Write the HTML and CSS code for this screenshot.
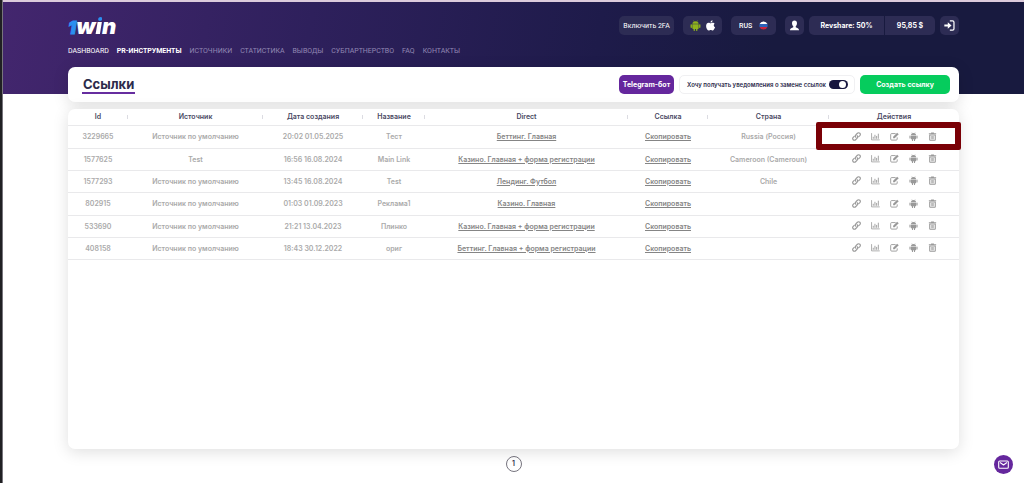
FILE: index.html
```html
<!DOCTYPE html>
<html lang="ru">
<head>
  <meta charset="UTF-8" />
  <meta name="viewport" content="width=device-width, initial-scale=1.0"/>
  <title>1win - Ссылки</title>
  <link rel="stylesheet" href="styles.css">
</head>
<body>

  <!-- Icon sprite -->
  <svg class="sprite" aria-hidden="true">
    <symbol id="i-link" viewBox="0 0 16 16">
      <g fill="none" stroke="currentColor" stroke-width="2" stroke-linecap="round">
        <path d="M7 9.6C5.600 8.300 5.700 6.300 6.800 5.100L9.600 2.200C10.800 1 12.700 1 13.900 2.200C15 3.400 15 5.200 13.900 6.400L12 8.300"/>
        <path d="M9 6.400C10.400 7.700 10.300 9.700 9.200 10.900L6.400 13.800C5.200 15 3.300 15 2.100 13.800C1 12.600 1 10.800 2.100 9.600L4 7.700"/>
      </g>
    </symbol>
    <symbol id="i-chart" viewBox="0 0 16 16">
      <path d="M1 2v12h14.500" fill="none" stroke="currentColor" stroke-width="1.400"/>
      <path d="M4 8.500v3.500M7 5v7M10 7v5M13 3v9" fill="none" stroke="currentColor" stroke-width="1.600"/>
    </symbol>
    <symbol id="i-edit" viewBox="0 0 16 16">
      <path d="M10 2.800H3A1.800 1.800 0 0 0 1.200 4.600V12.600A1.800 1.800 0 0 0 3 14.400H11A1.800 1.800 0 0 0 12.800 12.600V9.500" fill="none" stroke="currentColor" stroke-width="1.600"/>
      <path d="M5.500 8.500L12.700 1.300L15.500 4.100L8.300 11.300H5.500z" fill="currentColor"/>
    </symbol>
    <symbol id="i-android" viewBox="0 0 16 16">
      <path d="M5 .8L6.200 2.600M11 .8L9.800 2.600" stroke="currentColor" stroke-width=".9"/>
      <path d="M3.400 5.500C3.600 3.300 5.500 1.900 8 1.900S12.400 3.300 12.600 5.500z" fill="currentColor"/>
      <path d="M3.400 6.200H12.600V12A1 1 0 0 1 11.600 13H10.800V15A1 1 0 0 1 8.800 15V13H7.200V15A1 1 0 0 1 5.200 15V13H4.400A1 1 0 0 1 3.400 12z" fill="currentColor"/>
      <rect x=".8" y="6" width="2" height="5.600" rx="1" fill="currentColor"/>
      <rect x="13.200" y="6" width="2" height="5.600" rx="1" fill="currentColor"/>
    </symbol>
    <symbol id="i-trash" viewBox="0 0 16 16">
      <path d="M5.500 2V1H10.500V2H14.500V3.800H1.500V2z" fill="currentColor"/>
      <path d="M3 5.400H13V13.800A1 1 0 0 1 12 14.800H4A1 1 0 0 1 3 13.800z" fill="none" stroke="currentColor" stroke-width="1.800"/>
      <path d="M6 7V13M8 7V13M10 7V13" stroke="currentColor" stroke-width="1.200"/>
    </symbol>
    <symbol id="i-apple" viewBox="0 0 16 16">
      <path d="M11 .3C11.100 2.200 9.700 3.800 8 3.800C7.800 2 9.300 .500 11 .300z" fill="currentColor"/>
      <path d="M8.200 4.800C9 4.800 9.700 4 11.200 4C12.500 4 13.500 4.700 14.100 5.500C12 6.700 12.300 9.800 14.600 10.700C14 12.600 12.600 15.400 11 15.400C9.900 15.400 9.600 14.700 8.300 14.700C7 14.700 6.600 15.400 5.600 15.400C3.900 15.400 1.600 11.900 1.600 8.700C1.600 5.800 3.400 4 5.300 4C6.600 4 7.400 4.800 8.200 4.800z" fill="currentColor"/>
    </symbol>
    <symbol id="i-user" viewBox="0 0 16 16">
      <path d="M8 .8C10.400 .8 11.600 2.400 11.600 4.600C11.600 6.500 10.800 8.200 9.800 9V10.600C11.500 11.500 14.600 11.700 14.600 15H1.400C1.400 11.700 4.500 11.500 6.200 10.600V9C5.200 8.200 4.400 6.500 4.400 4.600C4.400 2.400 5.600 .8 8 .8z" fill="currentColor"/>
    </symbol>
    <symbol id="i-exit" viewBox="0 0 16 16">
      <path d="M8.500 1.300H12.500A2 2 0 0 1 14.500 3.300V12.700A2 2 0 0 1 12.500 14.700H8.500" fill="none" stroke="currentColor" stroke-width="1.800"/>
      <path d="M.5 6.700H5.500V3.300L11 8L5.500 12.700V9.300H.5z" fill="currentColor"/>
    </symbol>
    <symbol id="i-flag" viewBox="0 0 16 16">
      <path d="M1 5.500A7.500 7.500 0 0 1 15 5.500z" fill="#fff"/>
      <path d="M1 5.500H15A7.500 7.500 0 0 1 15 10.500H1A7.500 7.500 0 0 1 1 5.500z" fill="#2d62b8"/>
      <path d="M1 10.500H15A7.500 7.500 0 0 1 1 10.500z" fill="#c9243f"/>
    </symbol>
    <symbol id="i-mail" viewBox="0 0 16 16">
      <g fill="none" stroke="currentColor" stroke-width="1.600" stroke-linejoin="round">
        <rect x="1" y="3" width="14" height="10.500" rx="1.500"/>
        <path d="M3 5L8 8.800L13 5"/>
      </g>
    </symbol>
  </svg>

  <div class="page">
    <header class="header">
      <div class="container">
        <div class="topbar">
          <a href="#" class="logo"><span class="logo-one">1</span><span>w</span><span class="logo-i">i</span><span>n</span></a>
          <div class="tools">
            <button class="tool tool-2fa">Включить 2FA</button>
            <div class="tool tool-apps">
              <a href="#" class="android" aria-label="Android"><svg class="icon-lg"><use href="#i-android"/></svg></a>
              <a href="#" aria-label="iOS"><svg class="icon-lg"><use href="#i-apple"/></svg></a>
            </div>
            <label class="tool tool-lang">
              <select aria-label="Язык"><option>RUS</option></select>
              <svg class="icon"><use href="#i-flag"/></svg>
            </label>
            <div class="account">
              <button class="tool tool-icon" aria-label="Профиль"><svg class="icon-lg"><use href="#i-user"/></svg></button>
              <div class="balance">
                <span class="rate">Revshare: 50%</span>
                <span class="sum">95,85 $</span>
              </div>
              <button class="tool tool-icon" aria-label="Выйти"><svg class="icon-lg"><use href="#i-exit"/></svg></button>
            </div>
          </div>
        </div>
        <nav class="nav">
          <a href="#" class="light">DASHBOARD</a>
          <a href="#" class="active">PR-ИНСТРУМЕНТЫ</a>
          <a href="#">ИСТОЧНИКИ</a>
          <a href="#">СТАТИСТИКА</a>
          <a href="#">ВЫВОДЫ</a>
          <a href="#">СУБПАРТНЕРСТВО</a>
          <a href="#">FAQ</a>
          <a href="#">КОНТАКТЫ</a>
        </nav>
      </div>
    </header>

    <main class="container main">
      <div class="card title-card">
        <h1>Ссылки</h1>
        <div class="title-actions">
          <button class="btn btn-telegram">Telegram-бот</button>
          <label class="notify" for="notify">
            <span>Хочу получать уведомления о замене ссылок</span>
            <input type="checkbox" id="notify" class="toggle" checked>
          </label>
          <button class="btn btn-create">Создать ссылку</button>
        </div>
      </div>

      <div class="card table-card">
        <table>
          <colgroup>
            <col class="c-id"><col class="c-source"><col class="c-date"><col class="c-name">
            <col class="c-direct"><col class="c-copy"><col class="c-country"><col class="c-actions">
          </colgroup>
          <thead>
            <tr>
              <th>Id</th><th>Источник</th><th>Дата создания</th><th>Название</th>
              <th>Direct</th><th>Ссылка</th><th>Страна</th><th>Действия</th>
            </tr>
          </thead>
          <tbody id="rows"></tbody>
        </table>
      </div>

      <div class="pagination"><button>1</button></div>
    </main>
  </div>

  <button class="chat" aria-label="Написать"><svg class="icon-lg"><use href="#i-mail"/></svg></button>

  <script src="script.js"></script>
</body>
</html>
```

FILE: styles.css
```css
* {
  box-sizing: border-box;
}

body {
  margin: 0;
  border-left: 2px solid #202023;
  font-family: Inter, "Liberation Sans", sans-serif;
  font-size: 7px;
  line-height: 10px;
  color: #2c2b4b;
  background: #fff;
}

button,
select {
  font: inherit;
  color: inherit;
  border: none;
  padding: 0;
  background: none;
  cursor: pointer;
}

a {
  color: inherit;
  text-decoration: none;
}

svg {
  display: block;
}

.sprite {
  position: absolute;
  width: 0;
  height: 0;
}

.icon {
  width: 9px;
  height: 9px;
}

.icon-lg {
  width: 11px;
  height: 11px;
}

.page {
  display: flex;
  flex-direction: column;
  min-height: 100vh;
  border-left: 1px solid #77757c;
}

.container {
  width: 100%;
  max-width: 891px;
  margin: 0 auto;
}

/* Header */
.header {
  height: 94px;
  padding-top: 14px;
  border-top: 2px solid #dccbdc;
  background: linear-gradient(100deg, #43266e 0%, #2e205c 30%, #1e1b4a 58%, #181a3f 75%);
  color: #fff;
}

.topbar {
  display: flex;
  justify-content: space-between;
  align-items: center;
  height: 19px;
}

.logo {
  display: flex;
  align-items: baseline;
  padding-top: 3px;
  font-size: 22px;
  line-height: 24px;
  font-weight: 900;
  font-style: italic;
}

.logo-one {
  font-size: 18px;
  color: #2a8ff0;
  -webkit-text-stroke: 1px #2a8ff0;
}

.logo-i {
  color: transparent;
  background: linear-gradient(#2a8ff0 34%, #fff 34%);
  -webkit-background-clip: text;
  background-clip: text;
}

.tools {
  display: flex;
  gap: 9px;
}

.tool {
  display: flex;
  align-items: center;
  justify-content: center;
  height: 19px;
  border-radius: 5px;
  background: #2d2c54;
}

.tool-2fa {
  width: 55px;
  font-family: Roboto, sans-serif;
}

.tool-apps {
  width: 39px;
  gap: 4px;
}

.android {
  color: #8fb31c;
}

.tool-lang {
  width: 45px;
  gap: 6px;
  font-family: Roboto, sans-serif;
  font-weight: 500;
}

.tool-lang select {
  appearance: none;
}

.tool-icon {
  width: 19px;
}

.account {
  display: flex;
  gap: 5px;
}

.balance {
  display: flex;
  gap: 1px;
  font-weight: 700;
  line-height: 19px;
  text-align: center;
}

.balance span {
  background: #2d2c54;
}

.rate {
  width: 75px;
  border-radius: 5px 0 0 5px;
}

.sum {
  width: 50px;
  border-radius: 0 5px 5px 0;
}

.nav {
  display: flex;
  gap: 8px;
  margin-top: 11px;
  font-family: Roboto, sans-serif;
  color: #9288b3;
}

.nav .light {
  color: #fff;
}

.nav .active {
  color: #fff;
  font-weight: 700;
}

/* Content */
.main {
  flex: 1;
  display: flex;
  flex-direction: column;
  gap: 7px;
  margin-top: -27px;
}

.card {
  position: relative;
  border-radius: 7px;
  background: #fff;
  box-shadow: 0 3px 16px rgba(0, 0, 0, 0.13);
}

.title-card {
  display: flex;
  align-items: center;
  justify-content: space-between;
  height: 35px;
  padding: 0 9px 0 14px;
}

h1 {
  margin: 0;
  padding: 0 1px;
  font-size: 13px;
  line-height: 16px;
  font-weight: 700;
  border-bottom: 2px solid #662d9f;
}

.title-actions {
  display: flex;
  gap: 5px;
}

.btn {
  height: 19px;
  border-radius: 5px;
  color: #fff;
  font-weight: 700;
}

.btn-telegram {
  width: 55px;
  background: #65279d;
}

.btn-create {
  width: 90px;
  background: #06cc5d;
}

.notify {
  display: flex;
  align-items: center;
  justify-content: space-between;
  width: 176px;
  height: 19px;
  padding: 0 6px 0 7px;
  border: 1px solid #f0f0f2;
  border-radius: 5px;
  font-size: 6px;
  font-weight: 600;
  white-space: nowrap;
}

.toggle {
  appearance: none;
  display: flex;
  justify-content: flex-end;
  width: 19px;
  height: 9px;
  margin: 0;
  padding: 1px 2px;
  border-radius: 5px;
  background: #17163f;
}

.toggle::before {
  content: "";
  width: 7px;
  height: 7px;
  border-radius: 50%;
  background: #fff;
}

.toggle:not(:checked) {
  justify-content: flex-start;
}

/* Table */
.table-card {
  flex: 1;
}

table {
  width: 100%;
  table-layout: fixed;
  border-spacing: 0;
  text-align: center;
}

.c-id { width: 60px; }
.c-source { width: 135px; }
.c-date { width: 100px; }
.c-name { width: 62px; }
.c-direct { width: 203px; }
.c-copy { width: 80px; }
.c-country { width: 121px; }

th,
td {
  padding: 0;
  border-bottom: 1px solid #e9e9eb;
  white-space: nowrap;
}

th {
  height: 17px;
  font-weight: 600;
  color: #4a4963;
  background: linear-gradient(#dcdce2, #dcdce2) right center / 1px 4px no-repeat;
}

th:last-child {
  background: none;
}

td {
  height: 22px;
  font-weight: 600;
  color: #aaa;
}

tr:nth-child(3n + 1) td {
  height: 23px;
}

td a {
  color: #858585;
  text-decoration: underline;
}

.actions {
  display: flex;
  justify-content: center;
  gap: 10px;
  padding-bottom: 2px;
  color: #999;
}

.marked {
  position: relative;
}

.marked::after {
  content: "";
  position: absolute;
  inset: -4px -2px -2px -13px;
  border: 6px solid #7a0006;
  border-radius: 2px;
  pointer-events: none;
}

.pagination {
  display: flex;
  justify-content: center;
  padding-bottom: 11px;
}

.pagination button {
  width: 16px;
  height: 16px;
  border: 1px solid #77757f;
  border-radius: 50%;
  font-weight: 600;
}

.chat {
  position: fixed;
  right: 11px;
  bottom: 9px;
  display: flex;
  align-items: center;
  justify-content: center;
  width: 19px;
  height: 19px;
  border-radius: 50%;
  background: #65279d;
  color: #fff;
}
```

FILE: script.js
```js
const links = [
  ['3229665', 'Источник по умолчанию', '20:02 01.05.2025', 'Тест', 'Беттинг. Главная', 'Russia (Россия)'],
  ['1577625', 'Test', '16:56 16.08.2024', 'Main Link', 'Казино. Главная + форма регистрации', 'Cameroon (Cameroun)'],
  ['1577293', 'Источник по умолчанию', '13:45 16.08.2024', 'Test', 'Лендинг. Футбол', 'Chile'],
  ['802915', 'Источник по умолчанию', '01:03 01.09.2023', 'Реклама1', 'Казино. Главная', ''],
  ['533690', 'Источник по умолчанию', '21:21 13.04.2023', 'Плинко', 'Казино. Главная + форма регистрации', ''],
  ['408158', 'Источник по умолчанию', '18:43 30.12.2022', 'ориг', 'Беттинг. Главная + форма регистрации', '']
];

const actions = [
  ['link', 'Ссылка'],
  ['chart', 'Статистика'],
  ['edit', 'Изменить'],
  ['android', 'Android'],
  ['trash', 'Удалить']
];

const buttons = actions.map(([icon, label]) =>
  `<button aria-label="${label}"><svg class="icon"><use href="#i-${icon}"/></svg></button>`
).join('');

document.getElementById('rows').innerHTML = links.map(([id, source, date, name, direct, country], i) => `
  <tr>
    <td>${id}</td>
    <td>${source}</td>
    <td>${date}</td>
    <td>${name}</td>
    <td><a href="#">${direct}</a></td>
    <td><a href="#">Скопировать</a></td>
    <td>${country}</td>
    <td class="${i === 0 ? 'marked' : ''}"><div class="actions">${buttons}</div></td>
  </tr>
`).join('');
```
